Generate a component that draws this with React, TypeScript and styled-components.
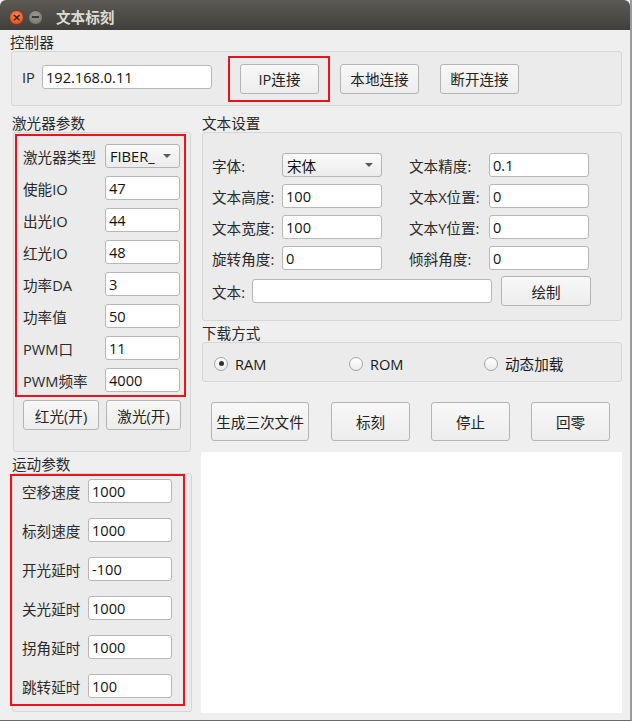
import { Fragment } from 'react';
import styled, { createGlobalStyle } from 'styled-components';

const GlobalStyle = createGlobalStyle`
  html, body { margin: 0; padding: 0; background: #efefef; }
  body {
    font-family: "Open Sans", "Noto Sans CJK SC", sans-serif;
    font-size: 14.6px;
    color: #2a2a2a;
  }
  * { box-sizing: border-box; }
`;

const laserRows = [
  { label: '使能IO', value: '47' },
  { label: '出光IO', value: '44' },
  { label: '红光IO', value: '48' },
  { label: '功率DA', value: '3' },
  { label: '功率值', value: '50' },
  { label: 'PWM口', value: '11' },
  { label: 'PWM频率', value: '4000' },
];

const motionRows = [
  { label: '空移速度', value: '1000' },
  { label: '标刻速度', value: '1000' },
  { label: '开光延时', value: '-100' },
  { label: '关光延时', value: '1000' },
  { label: '拐角延时', value: '1000' },
  { label: '跳转延时', value: '100' },
];

const Window = styled.div`
  width: 632px;
  height: 721px;
  display: flex;
  flex-direction: column;
  background: #efefef;
  border-right: 2px solid #9a9a9a;
  border-bottom: 1px solid #6a6a6a;
`;

const TitleBar = styled.div`
  height: 30px;
  flex-shrink: 0;
  display: flex;
  align-items: center;
  padding: 4px 0 0 9px;
  background: linear-gradient(#5d5a54, #403f3b);
  border-radius: 6px 6px 0 0;
`;

const WinButton = styled.span<{ $kind: 'close' | 'min' }>`
  width: 15px;
  height: 15px;
  border-radius: 50%;
  display: flex;
  align-items: center;
  justify-content: center;
  margin-right: 4px;
  font-size: 11px;
  line-height: 1;
  font-family: "DejaVu Sans", sans-serif;
  font-weight: bold;
  color: #3a1b10;
  background: ${p =>
    p.$kind === 'close'
      ? 'radial-gradient(circle at 50% 35%, #f5865e, #dc4a1c)'
      : 'radial-gradient(circle at 50% 35%, #9a9790, #75726c)'};
  border: 1px solid ${p => (p.$kind === 'close' ? '#8f3413' : '#4a4844')};
`;

const MinBar = styled.span`
  width: 7px;
  height: 2px;
  background: #3a3935;
`;

const Title = styled.span`
  margin-left: 9px;
  font-weight: bold;
  color: #dfdbd2;
  font-size: 14.6px;
  line-height: 18px;
`;

const GroupTitle = styled.div<{ $indent?: number }>`
  height: 21px;
  padding-top: 3px;
  line-height: 18px;
  padding-left: ${p => p.$indent ?? 0}px;
`;

const Frame = styled.div<{ $w: number; $h: number; $ml?: number }>`
  width: ${p => p.$w}px;
  height: ${p => p.$h}px;
  margin-left: ${p => p.$ml ?? 0}px;
  border: 1px solid #d6d6d6;
  border-radius: 3px;
  background: #ebebeb;
`;

const ControlFrame = styled(Frame)`
  display: flex;
  align-items: center;
  padding-left: 10px;
`;

const IpLabel = styled.span`
  width: 20px;
  margin-bottom: 4px;
`;

const Field = styled.input<{ $w: number }>`
  width: ${p => p.$w}px;
  height: 24px;
  border: 1px solid #b7b7b7;
  border-radius: 3px;
  background: #fff;
  padding: 0 0 0 3px;
  font: inherit;
  color: #111;
  outline: none;
`;

const Button = styled.button<{ $w: number; $h?: number; $ml?: number }>`
  width: ${p => p.$w}px;
  height: ${p => p.$h ?? 30}px;
  margin-left: ${p => p.$ml ?? 0}px;
  flex-shrink: 0;
  border: 1px solid #b4b4b4;
  border-radius: 3px;
  background: linear-gradient(#f8f8f8, #ededed);
  font: inherit;
  color: #222;
  padding: 0;
`;

const RedMark = styled.div`
  border: 2px solid #e8141c;
`;

const IpMark = styled(RedMark)`
  margin-left: 16px;
  padding: 6px 9px 6px 10px;
`;

const Columns = styled.div`
  display: flex;
  gap: 10px;
  padding-left: 12px;
  margin-top: 5px;
`;

const Column = styled.div<{ $w: number }>`
  width: ${p => p.$w}px;
  display: flex;
  flex-direction: column;
`;

const LaserMark = styled(RedMark)`
  margin: 1px 0 0 1px;
  width: 171px;
  padding: 8px 0 3px 0;
  display: grid;
  grid-template-columns: 88px 75px;
  grid-auto-rows: 24px;
  row-gap: 8px;
  align-items: center;
`;

const MotionMark = styled(RedMark)`
  margin: 0 0 0 -3px;
  width: 175px;
  padding: 3px 0 6px 0;
  display: grid;
  grid-template-columns: 76px 84px;
  grid-auto-rows: 24px;
  row-gap: 15px;
  align-items: center;
`;

const RowLabel = styled.span<{ $pl?: number; $w?: number }>`
  padding-left: ${p => p.$pl ?? 0}px;
  width: ${p => (p.$w ? `${p.$w}px` : 'auto')};
  white-space: nowrap;
`;

const Combo = styled.div<{ $w: number }>`
  width: ${p => p.$w}px;
  height: 24px;
  display: flex;
  align-items: center;
  border: 1px solid #b4b4b4;
  border-radius: 3px;
  background: linear-gradient(#fafafa, #ececec);
  padding-left: 4px;
  color: #111;
  white-space: nowrap;
`;

const Arrow = styled.i`
  margin-left: auto;
  margin-right: 8px;
  width: 0;
  height: 0;
  border-left: 4px solid transparent;
  border-right: 4px solid transparent;
  border-top: 4px solid #5a5a5a;
`;

const PairButtons = styled.div`
  display: flex;
  gap: 7px;
  margin-top: 3px;
  padding-left: 9px;
`;

const TextFrame = styled(Frame)`
  padding: 20px 0 0 9px;
`;

const TextGrid = styled.div`
  display: grid;
  grid-template-columns: 70px 100px 27px 80px 100px;
  grid-auto-rows: 24px;
  row-gap: 7px;
  align-items: center;
`;

const TextRow = styled.div`
  display: flex;
  align-items: center;
  height: 30px;
  margin-top: 6px;
`;

const DownloadFrame = styled(Frame)`
  display: flex;
  align-items: center;
  padding: 3px 0 0 11px;
`;

const RadioItem = styled.label`
  width: 135px;
  display: flex;
  align-items: center;
  color: #1a1a1a;
`;

const RadioDot = styled.span<{ $on?: boolean }>`
  width: 14px;
  height: 14px;
  border-radius: 50%;
  border: 1px solid #a3a3a3;
  background: linear-gradient(#ffffff, #ececec);
  display: flex;
  align-items: center;
  justify-content: center;
  margin-right: 7px;

  &::after {
    content: '';
    width: 5px;
    height: 5px;
    border-radius: 50%;
    background: ${p => (p.$on ? '#333' : 'transparent')};
  }
`;

const ActionRow = styled.div`
  display: flex;
  margin-top: 20px;
  padding-left: 9px;
`;

const Canvas = styled.div`
  margin: 11px 0 0 -1px;
  width: 421px;
  height: 261px;
  background: #fff;
`;

export default function App() {
  return (
    <>
      <GlobalStyle />
      <Window>
        <TitleBar>
          <WinButton $kind="close">×</WinButton>
          <WinButton $kind="min"><MinBar /></WinButton>
          <Title>文本标刻</Title>
        </TitleBar>

        <GroupTitle $indent={10}>控制器</GroupTitle>
        <ControlFrame $w={611} $h={55} $ml={11}>
          <IpLabel>IP</IpLabel>
          <Field $w={170} defaultValue="192.168.0.11" style={{ marginBottom: 4 }} />
          <IpMark>
            <Button $w={79}>IP连接</Button>
          </IpMark>
          <Button $w={79} $ml={10}>本地连接</Button>
          <Button $w={79} $ml={21}>断开连接</Button>
        </ControlFrame>

        <Columns>
          <Column $w={180}>
            <GroupTitle>激光器参数</GroupTitle>
            <Frame $w={178} $h={320} $ml={1}>
              <LaserMark>
                <RowLabel $pl={6}>激光器类型</RowLabel>
                <Combo $w={75}>
                  FIBER_
                  <Arrow />
                </Combo>
                {laserRows.map(r => (
                  <Fragment key={r.label}>
                    <RowLabel $pl={6}>{r.label}</RowLabel>
                    <Field $w={75} defaultValue={r.value} />
                  </Fragment>
                ))}
              </LaserMark>
              <PairButtons>
                <Button $w={76}>红光(开)</Button>
                <Button $w={75}>激光(开)</Button>
              </PairButtons>
            </Frame>

            <GroupTitle>运动参数</GroupTitle>
            <Frame $w={180} $h={239}>
              <MotionMark>
                {motionRows.map(r => (
                  <Fragment key={r.label}>
                    <RowLabel $pl={10}>{r.label}</RowLabel>
                    <Field $w={84} defaultValue={r.value} />
                  </Fragment>
                ))}
              </MotionMark>
            </Frame>
          </Column>

          <Column $w={420}>
            <GroupTitle>文本设置</GroupTitle>
            <TextFrame $w={420} $h={189}>
              <TextGrid>
                <RowLabel>字体:</RowLabel>
                <Combo $w={100}>
                  宋体
                  <Arrow />
                </Combo>
                <span />
                <RowLabel>文本精度:</RowLabel>
                <Field $w={100} defaultValue="0.1" />

                <RowLabel>文本高度:</RowLabel>
                <Field $w={100} defaultValue="100" />
                <span />
                <RowLabel>文本X位置:</RowLabel>
                <Field $w={100} defaultValue="0" />

                <RowLabel>文本宽度:</RowLabel>
                <Field $w={100} defaultValue="100" />
                <span />
                <RowLabel>文本Y位置:</RowLabel>
                <Field $w={100} defaultValue="0" />

                <RowLabel>旋转角度:</RowLabel>
                <Field $w={100} defaultValue="0" />
                <span />
                <RowLabel>倾斜角度:</RowLabel>
                <Field $w={100} defaultValue="0" />
              </TextGrid>
              <TextRow>
                <RowLabel $w={40}>文本:</RowLabel>
                <Field $w={240} defaultValue="" />
                <Button $w={90} $ml={9}>绘制</Button>
              </TextRow>
            </TextFrame>

            <GroupTitle>下载方式</GroupTitle>
            <DownloadFrame $w={420} $h={40}>
              <RadioItem><RadioDot $on />RAM</RadioItem>
              <RadioItem><RadioDot />ROM</RadioItem>
              <RadioItem><RadioDot />动态加载</RadioItem>
            </DownloadFrame>

            <ActionRow>
              <Button $w={98} $h={39}>生成三次文件</Button>
              <Button $w={79} $h={39} $ml={22}>标刻</Button>
              <Button $w={79} $h={39} $ml={21}>停止</Button>
              <Button $w={79} $h={39} $ml={21}>回零</Button>
            </ActionRow>

            <Canvas />
          </Column>
        </Columns>
      </Window>
    </>
  );
}
